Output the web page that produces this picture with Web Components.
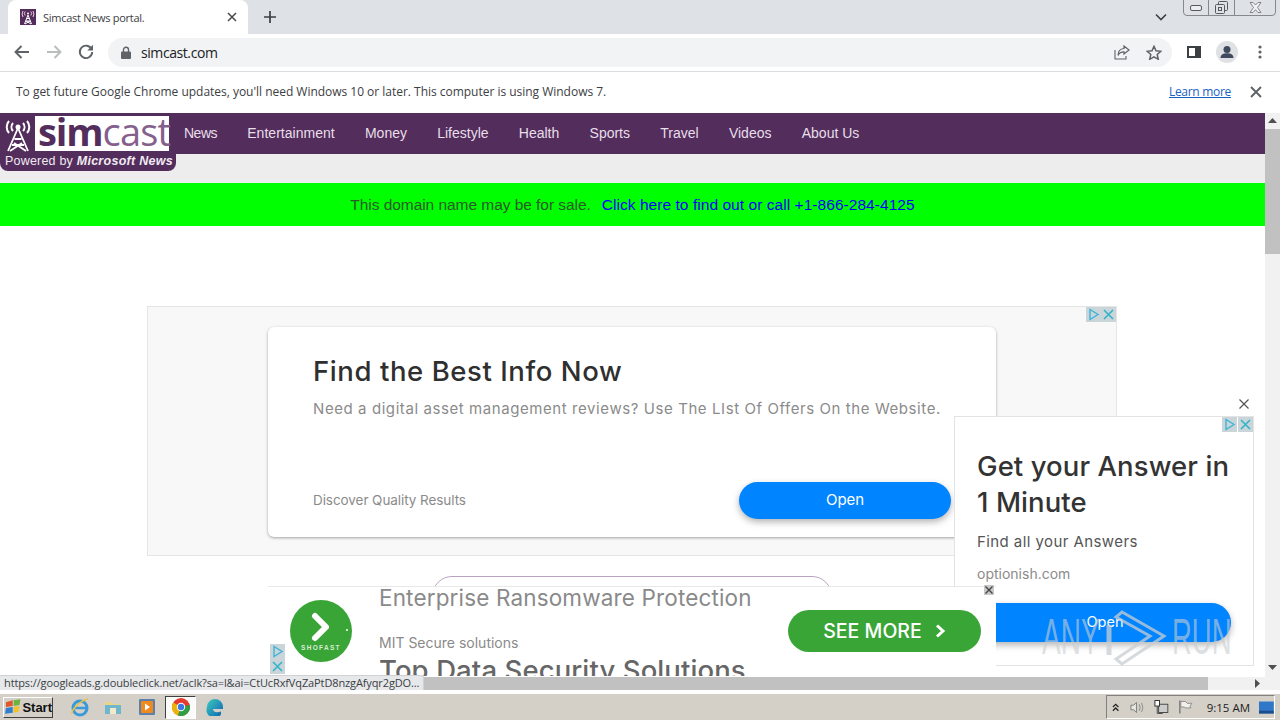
<!DOCTYPE html>
<html><head><meta charset="utf-8"><title>Simcast News portal.</title>
<style>
html,body{margin:0;padding:0;width:1280px;height:720px;overflow:hidden;background:#fff;font-family:"Open Sans",sans-serif}
browser-window{display:flex;flex-direction:column;width:1280px;height:720px}
</style></head><body>
<browser-window>
  <tab-strip title-text="Simcast News portal."></tab-strip>
  <nav-toolbar url="simcast.com"></nav-toolbar>
  <info-bar>To get future Google Chrome updates, you'll need Windows 10 or later. This computer is using Windows 7.</info-bar>
  <page-view>
    <site-nav></site-nav>
    <sale-bar></sale-bar>
    <leader-ad></leader-ad>
    <side-ad></side-ad>
    <bottom-ad></bottom-ad>
    <any-watermark></any-watermark>
  </page-view>
  <status-bubble>https://googleads.g.doubleclick.net/aclk?sa=l&amp;ai=CtUcRxfVqZaPtD8nzgAfyqr2gDO...</status-bubble>
  <task-bar></task-bar>
</browser-window>
<script>
function def(name,html){customElements.define(name,class extends HTMLElement{constructor(){super();const r=this.attachShadow({mode:'open'});r.innerHTML=typeof html==='function'?html(this):html;}
connectedCallback(){ if(typeof html==='function'){this.shadowRoot.innerHTML=html(this);} }});}
const ADC=(s)=>`<svg width="15" height="15" viewBox="0 0 15 15"><rect width="15" height="15" fill="#c9d5d8"/><path d="M4 2.5v10l8-5z" fill="none" stroke="#3fb4d8" stroke-width="1.4"/></svg>`;
const ADX=()=>`<svg width="15" height="15" viewBox="0 0 15 15"><rect width="15" height="15" fill="#c9d5d8"/><path d="M3 3l9 9M12 3l-9 9" stroke="#2fb3c9" stroke-width="1.5"/></svg>`;

def('tab-strip',(h)=>`<style>
:host{display:flex;height:34px;background:#dee1e6;position:relative;align-items:flex-end;flex:none}
.tab{margin-left:8px;width:240px;height:34px;background:#fff;border-radius:8px 8px 0 0;display:flex;align-items:center;box-sizing:border-box;padding:0 11px 0 12px;font:11px "Open Sans",sans-serif;color:#3c4043}
.t{margin-left:7px;flex:1;letter-spacing:-.28px}
.plus{margin:0 0 0 16px;width:16px;height:34px;display:flex;align-items:center}
.chev{position:absolute;left:1155px;top:13px}
.win{position:absolute;left:1183px;top:-1px;height:17px;width:93px;display:flex;border:1px solid #85888d;border-radius:0 0 4px 4px;box-sizing:border-box;background:#dee1e6}
.win div{display:flex;align-items:center;justify-content:center;border-right:1px solid #85888d}
.win div:nth-child(1){width:24px}.win div:nth-child(2){width:25px}.win div:nth-child(3){flex:1;border:0}
</style>
<div class="tab"><svg width="16" height="16" viewBox="0 0 16 16"><rect width="16" height="16" fill="#532d5c"/><path d="M4.500 15l3.500-9 3.500 9M5.800 12h4.400M6.600 9.500h2.800M5 15l5-3M11 15l-5-3" stroke="#fff" stroke-width="1" fill="none"/><path d="M3 8a5.500 5.500 0 0 1 0-6M13 8a5.500 5.500 0 0 0 0-6M5.200 6.500a3 3 0 0 1 0-4M10.800 6.500a3 3 0 0 0 0-4" stroke="#f3c8d8" fill="none"/><circle cx="8" cy="4.500" r="1" fill="#fff"/></svg>
<span class="t">${h.getAttribute('title-text')||''}</span>
<svg width="10" height="10" viewBox="0 0 10 10"><path d="M1 1l8 8M9 1l-8 8" stroke="#45484c" stroke-width="1.500"/></svg></div>
<div class="plus"><svg width="12" height="12" viewBox="0 0 12 12"><path d="M6 0v12M0 6h12" stroke="#3c4043" stroke-width="1.700"/></svg></div>
<svg class="chev" width="12" height="8" viewBox="0 0 12 8"><path d="M1 1.500l5 5 5-5" fill="none" stroke="#3c4043" stroke-width="1.600"/></svg>
<div class="win"><div><svg width="12" height="6" viewBox="0 0 12 6"><rect x=".5" y=".5" width="11" height="5" rx="1.500" fill="#eceef1" stroke="#55585c"/></svg></div>
<div><svg width="13" height="13" viewBox="0 0 13 13"><rect x="3.500" y=".5" width="9" height="9" rx="1" fill="none" stroke="#55585c"/><rect x=".5" y="3.500" width="9" height="9" rx="1" fill="#dee1e6" stroke="#55585c"/><rect x="3.500" y="6.500" width="3" height="3" fill="none" stroke="#55585c"/></svg></div>
<div><svg width="13" height="11" viewBox="0 0 13 11"><path d="M1 .5l3 0 2.500 2.500 2.500-2.500 3 0-3.500 5 3.500 5-3 0-2.500-2.800-2.500 2.800-3 0 3.500-5z" fill="#f0f1f3" stroke="#6a6d72" stroke-width=".8"/></svg></div></div>`);

def('nav-toolbar',(h)=>`<style>
:host{display:flex;align-items:center;height:38px;background:#fff;border-bottom:1px solid #dadce0;box-sizing:border-box;flex:none;padding:0 0 1px 14px}
svg{flex:none;display:block}
.ob{margin-left:14px;width:1064px;height:29px;background:#f1f3f4;border-radius:15px;display:flex;align-items:center;box-sizing:border-box;padding:0 10px 0 13px;font:14px "Open Sans",sans-serif;color:#202124}
.u{margin-left:10px;flex:1;letter-spacing:-.42px}
.g{gap:16px;display:flex;align-items:center}
</style>
<svg width="16" height="14" viewBox="0 0 16 14"><path d="M15 7H2M7.500 1L1.500 7l6 6" fill="none" stroke="#5f6368" stroke-width="1.900"/></svg>
<svg style="margin-left:16px" width="16" height="14" viewBox="0 0 16 14"><path d="M1 7h13M8.500 1l6 6-6 6" fill="none" stroke="#babcbe" stroke-width="1.900"/></svg>
<svg style="margin-left:16px" width="16" height="16" viewBox="0 0 16 16"><path d="M13.600 5.200A6.200 6.200 0 1 0 14.200 8" fill="none" stroke="#5f6368" stroke-width="1.900"/><path d="M15 .8v5.700H9.300z" fill="#5f6368"/></svg>
<div class="ob"><svg width="10" height="13" viewBox="0 0 10 13"><path d="M2.500 6V3.800a2.500 2.500 0 0 1 5 0V6" fill="none" stroke="#5f6368" stroke-width="1.400"/><rect y="5.500" width="10" height="7.500" rx="1" fill="#5f6368"/></svg>
<span class="u">${h.getAttribute('url')||''}</span>
<div class="g"><svg width="16" height="15" viewBox="0 0 16 15"><path d="M1 5v9h11v-3" fill="none" stroke="#5f6368" stroke-width="1.100"/><path d="M10 1l5 4-5 4V6.800C7 6.800 5 8 4 10.500 4 6.500 6.500 3.800 10 3.500z" fill="none" stroke="#5f6368" stroke-width="1.200"/></svg>
<svg width="16" height="15" viewBox="0 0 16 15"><path d="M8 1.300l2 4.500 4.900.5-3.700 3.200 1.100 4.800L8 11.800l-4.300 2.500 1.100-4.800L1.100 6.300 6 5.800z" fill="none" stroke="#5f6368" stroke-width="1.500"/></svg></div></div>
<svg style="margin-left:15px" width="14" height="12" viewBox="0 0 14 12"><rect x="1" y="1" width="12" height="10" fill="none" stroke="#3c4043" stroke-width="2"/><rect x="8" y="1" width="5" height="10" fill="#3c4043"/></svg>
<svg style="margin-left:15px" width="22" height="22" viewBox="0 0 22 22"><circle cx="11" cy="11" r="11" fill="#dfe1e5"/><circle cx="11" cy="8.500" r="3.500" fill="#3f4a5e"/><path d="M4.500 17c0-3.500 3-4.800 6.500-4.800s6.500 1.300 6.500 4.800z" fill="#3f4a5e"/></svg>
<svg style="margin-left:20px" width="4" height="14" viewBox="0 0 4 14"><circle cx="2" cy="2" r="1.600" fill="#5f6368"/><circle cx="2" cy="7" r="1.600" fill="#5f6368"/><circle cx="2" cy="12" r="1.600" fill="#5f6368"/></svg>`);

def('info-bar',`<style>
:host{display:flex;align-items:center;height:41px;background:#fff;box-sizing:border-box;padding:0 18px 3px 16px;flex:none;font:12px "Open Sans",sans-serif;color:#3c4043}
.m{flex:1;letter-spacing:-.02px}
a{color:#1a5fc4;text-decoration:underline;margin-right:19px;letter-spacing:-.3px}
svg{margin-top:1px}
</style><span class="m"><slot></slot></span><a>Learn more</a>
<svg width="12" height="12" viewBox="0 0 12 12"><path d="M1 1l10 10M11 1L1 11" stroke="#5f6368" stroke-width="1.900"/></svg>`);

def('page-view',`<style>
:host{display:grid;grid-template-columns:1fr 15px;grid-template-rows:1fr 13px;flex:1;min-height:0;position:relative;overflow:hidden}
.p{overflow:hidden;position:relative;background:#fff;min-width:0}
.vs{background:#f1f1f1;display:flex;flex-direction:column;align-items:center}
.vs .th{width:15px;height:125px;background:#c1c1c1;margin-top:6px}
.vs .sp{flex:1}
.hs{background:#f1f1f1;display:flex;align-items:stretch;grid-column:1}
.hs .th{margin-left:424px;width:784px;background:#c1c1c1}
.cn{background:#f1f1f1;display:flex}
.ar{margin-left:auto;margin-right:5px;align-self:center;display:block}
.up{margin-top:5px}.dn{margin-bottom:7px}
</style>
<div class="p"><slot></slot></div>
<div class="vs"><svg class="up" width="9" height="5"  viewBox="0 0 9 5"><path d="M4.500 0l4.500 5H0z" fill="#505050"/></svg><div class="th"></div><div class="sp"></div><svg class="dn" width="9" height="5" viewBox="0 0 9 5"><path d="M0 0h9L4.500 5z" fill="#505050"/></svg></div>
<div class="hs"><div class="th"></div><svg class="ar" width="5" height="9" viewBox="0 0 5 9"><path d="M0 0l5 4.500L0 9z" fill="#505050"/></svg></div>
<div class="cn"></div>`);

def('site-nav',`<style>
:host{display:block;background:#eeedee;height:70px;position:relative;font:14px "Liberation Sans",Arial,sans-serif}
.bar{background:#532d5c;height:41px;display:flex;align-items:center;gap:30.250px;padding:0 0 2px 184px;color:#e8dfe9;box-sizing:border-box}
.bar .n{letter-spacing:-.5px}
.bar .e{letter-spacing:.02px}
.logo{position:absolute;left:0;top:0;width:176px;height:58px;background:#532d5c;border-radius:0 0 8px 8px}
.w{position:absolute;left:35px;top:3px;width:134px;height:35px;background:#fff;box-sizing:border-box;padding:0 0 0 3px;font:700 38px/31px "Open Sans",sans-serif;letter-spacing:-1.100px;color:#532d5c;white-space:nowrap}
.w i{font-style:normal;font-weight:400;color:#85608d;letter-spacing:-.8px}
.t{position:absolute;left:5px;top:41px;color:#f1eaf2;font:12.500px "Liberation Sans",Arial,sans-serif;letter-spacing:.2px;white-space:nowrap}
.t b{font-style:italic;letter-spacing:.28px}
svg{position:absolute;left:5px;top:5px}
</style>
<div class="bar"><span class="n">News</span><span class="e">Entertainment</span><span>Money</span><span>Lifestyle</span><span>Health</span><span>Sports</span><span>Travel</span><span>Videos</span><span>About Us</span></div>
<div class="logo"><svg width="26" height="34" viewBox="0 0 26 34"><g fill="none" stroke="#fff" stroke-width="2"><path d="M4 15a9 9 0 0 1 0-12M22 15a9 9 0 0 0 0-12M8 13a6 6 0 0 1 0-8M18 13a6 6 0 0 0 0-8"/><path d="M3 33L13 10l10 23M7 27h12M9.500 21h7M5 33l12-8M21 33L9 25" stroke-width="1.800"/></g><circle cx="13" cy="9" r="2.500" fill="#fff"/></svg>
<div class="w">sim<i>cast</i></div><div class="t">Powered by <b>Microsoft News</b></div></div>`);

def('sale-bar',`<style>
:host{display:block;height:43px;background:#0f0;color:#2a5a2a;text-align:center;font:15.500px/44px "Liberation Sans",Arial,sans-serif;letter-spacing:-.05px}
a{color:#00f;margin-left:11px;letter-spacing:.05px}
</style>This domain name may be for sale.<a>Click here to find out or call +1-866-284-4125</a>`);

def('leader-ad',`<style>
:host{display:block;position:relative;height:350px;font-family:Inter,sans-serif}
.bx{position:absolute;left:147px;top:80px;width:970px;height:250px;background:#f8f8f8;border:1px solid #e5e5e5;box-sizing:border-box;display:flex;justify-content:center}
.ch{position:absolute;right:0;top:0;display:flex;gap:0}
.card{margin:20px 0 0 0;width:728px;height:210px;background:#fff;border-radius:6px;box-shadow:0 1px 3px rgba(0,0,0,.35);box-sizing:border-box;padding:26px 45px 18px;display:flex;flex-direction:column}
h2{margin:0;font:500 27.500px/36px Inter,sans-serif;color:#2f2f2f;letter-spacing:.58px;white-space:nowrap}
p{margin:10px 0 0;font:15px/20px Inter,sans-serif;color:#8b8b8b;white-space:nowrap;letter-spacing:.58px;flex:1}
.f{display:flex;justify-content:space-between;align-items:center;font:13.500px Inter,sans-serif;color:#8b8b8b;letter-spacing:-.07px}
.f span{padding-bottom:2px}
.b{width:212px;height:37px;border-radius:19px;background:#0084ff;color:#fff;font:15px/35px Inter,sans-serif;text-align:center;box-shadow:0 3px 7px rgba(0,0,0,.3)}
.pill{position:absolute;left:432px;top:350px;width:400px;height:40px;box-sizing:border-box;border:1px solid #b9a4c0;border-radius:20px}
</style>
<div class="bx"><div class="ch">${ADC()}${ADX()}</div>
<div class="card"><h2>Find the Best Info Now</h2><p>Need a digital asset management reviews? Use The LIst Of Offers On the Website.</p>
<div class="f"><span>Discover Quality Results</span><div class="b">Open</div></div></div></div>
<div class="pill"></div>`);

def('side-ad',`<style>
:host{display:block;position:absolute;left:954px;top:303px;width:300px;height:250px;background:#fff;border:1px solid #e3e3e3;box-sizing:border-box;font-family:Inter,sans-serif;padding:31px 0 0 22px}
.x{position:absolute;left:284px;top:-18px}
.ch{position:absolute;right:0;top:0;display:flex;gap:1px}
h2{margin:0;font:500 27.500px/36px Inter,sans-serif;color:#333;letter-spacing:.08px;white-space:nowrap}
p{margin:12px 0 0;font:15px/20px Inter,sans-serif;color:#555;letter-spacing:.42px}
.d{margin-top:12px;font:14px/20px Inter,sans-serif;color:#8b8b8b}
.b{position:absolute;left:-20px;right:22px;top:186px;height:39px;border-radius:20px;background:#0084ff;color:#fff;font:14.500px/37px Inter,sans-serif;text-align:center;padding-left:44px;box-sizing:border-box;box-shadow:0 3px 7px rgba(0,0,0,.3)}
</style>
<svg class="x" width="10" height="10" viewBox="0 0 10 10"><path d="M.5.5l9 9M9.500.5l-9 9" stroke="#555" stroke-width="1.200"/></svg>
<div class="ch">${ADC()}${ADX()}</div>
<h2>Get your Answer in<br>1 Minute</h2><p>Find all your Answers</p><div class="d">optionish.com</div><div class="b">Open</div>`);

def('bottom-ad',`<style>
:host{display:block;position:absolute;left:268px;top:473px;width:728px;height:90px;background:#fff;border-top:1px solid #e8e8e8;box-sizing:border-box;font-family:Inter,sans-serif;overflow:visible}
.clip{position:absolute;inset:0;overflow:hidden}
.ic{position:absolute;left:22px;top:13px}
.a{position:absolute;left:111px;top:0;font:22.500px/22px Inter,sans-serif;color:#8a8a8a;white-space:nowrap;letter-spacing:.15px}
.m{position:absolute;left:111px;top:46px;font:14px/20px Inter,sans-serif;color:#8a8a8a;white-space:nowrap}
.c{position:absolute;left:111px;top:65px;font:500 27.500px/36px Inter,sans-serif;color:#666;white-space:nowrap;letter-spacing:.1px}
.b{position:absolute;left:520px;top:23px;width:193px;height:42px;border-radius:21px;background:#3aa537;color:#fff;font:500 19.500px/42px Inter,sans-serif;display:flex;align-items:center;justify-content:center;gap:13px;letter-spacing:0}
.ac{position:absolute;left:2px;top:57px;display:flex;flex-direction:column;gap:0}
.cl{position:absolute;left:716px;top:-2px}
</style>
<div class="clip"><svg class="ic" width="62" height="62" viewBox="0 0 62 62"><circle cx="31" cy="31" r="31" fill="#3aa537"/><path d="M25 16l11 11-11 11" fill="none" stroke="#fff" stroke-width="6" stroke-linecap="round" stroke-linejoin="round"/><circle cx="57" cy="30" r="1" fill="#fff"/><text x="31" y="50" text-anchor="middle" font-family="Liberation Sans" font-weight="700" font-size="6.500" letter-spacing="1.300" fill="#d5ecd4">SHOFAST</text></svg>
<div class="a">Enterprise Ransomware Protection</div><div class="m">MIT Secure solutions</div><div class="c">Top Data Security Solutions</div>
<div class="b"><span>SEE MORE</span><svg width="11" height="14" viewBox="0 0 11 14"><path d="M2 1.500L8 7l-6 5.500" fill="none" stroke="#fff" stroke-width="3"/></svg></div>
<div class="ac">${ADC()}${ADX()}</div></div>
<svg class="cl" width="10" height="10" viewBox="0 0 10 10"><rect width="10" height="10" fill="#c8c8c8"/><path d="M1.500 1.500l7 7M8.500 1.500l-7 7" stroke="#444" stroke-width="1.400"/></svg>`);

def('any-watermark',`<style>
:host{display:block;position:absolute;left:1036px;top:490px;width:200px;height:70px;pointer-events:none;font:50px/60px "Liberation Sans",Arial,sans-serif;color:rgba(200,205,210,.6)}
.a{position:absolute;left:6px;top:4px;transform:scaleX(.56);transform-origin:0 0;white-space:nowrap}
.r{position:absolute;left:136px;top:4px;transform:scaleX(.55);transform-origin:0 0;white-space:nowrap}
svg{position:absolute;left:70px;top:6px}
</style><span class="a">ANY</span><svg width="62" height="62" viewBox="0 0 62 62"><path d="M16 3l42 24-42 28-6-5 34-23-34-19z" fill="none" stroke="rgba(200,205,210,.75)" stroke-width="3"/><path d="M3 16v30" stroke="rgba(200,205,210,.75)" stroke-width="5"/></svg><span class="r">RUN</span>`);

def('status-bubble',`<style>
:host{display:block;position:absolute;left:0;top:675px;width:424px;height:15px;background:#e6e8ea;border-top:1px solid #cfd1d3;border-right:1px solid #cfd1d3;box-sizing:border-box;font:11px/14px "Open Sans",sans-serif;color:#3c4043;padding-left:4px;white-space:nowrap;letter-spacing:-.12px;border-radius:0 3px 0 0}
</style><slot></slot>`);

def('task-bar',`<style>
:host{display:flex;align-items:center;height:30px;flex:none;background:#d4d0c8;border-top:4px solid #fff;box-sizing:border-box;padding-left:3px;position:relative;font:11.500px "Open Sans",sans-serif;color:#222}
.st{width:50px;height:21px;box-sizing:border-box;background:#d4d0c8;border:1px solid;border-color:#fff #404040 #404040 #fff;display:flex;align-items:center;gap:0;padding-left:1px;font:700 13px "Liberation Sans",Arial,sans-serif;color:#111}
.q{display:flex;align-items:center;margin-left:17px}
.q>*{flex:none}
.act{width:31px;height:23px;box-sizing:border-box;background:#fbfbf9;border:1px solid;border-color:#404040 #fff #fff #404040;display:flex;align-items:center;justify-content:center}
.tray{margin-left:auto;margin-right:5px;height:24px;width:169px;box-sizing:border-box;border:1px solid;border-color:#808080 #fff #fff #808080;display:flex;align-items:center;padding-left:5px}
.tm{margin-left:14px;width:57px}
</style>
<div class="st"><svg width="18" height="16" viewBox="0 0 18 16"><path d="M1 3l7-2v6l-7 1z" fill="#e2562b"/><path d="M9 1l7-1-1 6-6 1z" fill="#6cb33f"/><path d="M1 9l7-1v6l-8 1z" fill="#2f7fd1"/><path d="M9 8l6-1-1 6-5 1z" fill="#f4c222"/></svg>Start</div>
<div class="q">
<svg width="20" height="20" viewBox="0 0 20 20"><ellipse cx="10" cy="11" rx="7" ry="7" fill="none" stroke="#3a9ad9" stroke-width="3"/><path d="M4 11h12" stroke="#3a9ad9" stroke-width="2.500"/><path d="M2 17C1 13 11 3 18 2" fill="none" stroke="#e8c24a" stroke-width="1.500"/></svg>
<svg style="margin-left:14px" width="18" height="16" viewBox="0 0 18 16"><path d="M1 3h6l2 2h8v10H1z" fill="#e9d48a"/><rect x="1" y="6" width="16" height="9" fill="#6fb6cf"/><rect x="6" y="9" width="6" height="6" fill="#f2e9c8"/></svg>
<svg style="margin-left:17px" width="16" height="16" viewBox="0 0 16 16"><rect width="16" height="16" rx="1" fill="#5d7fa8"/><rect x="2" y="2" width="12" height="12" rx="1" fill="#ef8a1e"/><path d="M6 4.500l5 3.500-5 3.500z" fill="#fff"/></svg>
<div class="act" style="margin-left:10px"><svg width="18" height="18" viewBox="0 0 18 18"><circle cx="9" cy="9" r="9" fill="#e33b2e"/><path d="M9 9L1.200 4.500A9 9 0 0 0 6 17.500z" fill="#eab308"/><path d="M9 9l-3 8.500A9 9 0 0 0 17.800 7z" fill="#2ea043"/><circle cx="9" cy="9" r="4.200" fill="#fff"/><circle cx="9" cy="9" r="3.200" fill="#3b78e7"/></svg></div>
<svg style="margin-left:10px" width="18" height="18" viewBox="0 0 18 18"><defs><linearGradient id="e" x1="0" y1="0" x2="1" y2="1"><stop offset="0" stop-color="#3ecbc0"/><stop offset="1" stop-color="#0b5fb0"/></linearGradient></defs><path d="M1 9a8 8 0 0 1 16 0v2H7c0 3 3 4 8 2.500v3A8 8 0 0 1 1 9z" fill="url(#e)"/></svg>
</div>
<div class="tray"><svg width="8" height="9" viewBox="0 0 8 9"><path d="M1 4l3-3 3 3M1 8l3-3 3 3" fill="none" stroke="#222" stroke-width="1.300"/></svg>
<svg style="margin-left:11px" width="16" height="15" viewBox="0 0 16 15"><path d="M1 5h3l3-3v11l-3-3H1z" fill="#e8e6e0" stroke="#777"/><path d="M10 4q2 3.500 0 7M12.500 2.500q3 5 0 10" fill="none" stroke="#888"/></svg>
<svg style="margin-left:9px" width="16" height="16" viewBox="0 0 16 16"><rect x="5" y="5" width="10" height="9" fill="#ccc" stroke="#444"/><rect x="1" y="1" width="5" height="6" fill="#fff" stroke="#222"/><path d="M3.500 7v8h6" stroke="#444" fill="none"/></svg>
<svg style="margin-left:9px" width="16" height="16" viewBox="0 0 16 16"><path d="M2 1v14" stroke="#777" stroke-width="1.500"/><path d="M3 2h5l2 2h5l-2 3 1 2H8L7 8H3z" fill="#f2f0ea" stroke="#888"/></svg>
<span class="tm">9:15 AM</span>
<svg width="16" height="13" viewBox="0 0 16 13"><rect width="16" height="13" fill="#2f78c8"/><rect y="10" width="16" height="3" fill="#1e4e8a"/></svg></div>`);
</script></body></html>
